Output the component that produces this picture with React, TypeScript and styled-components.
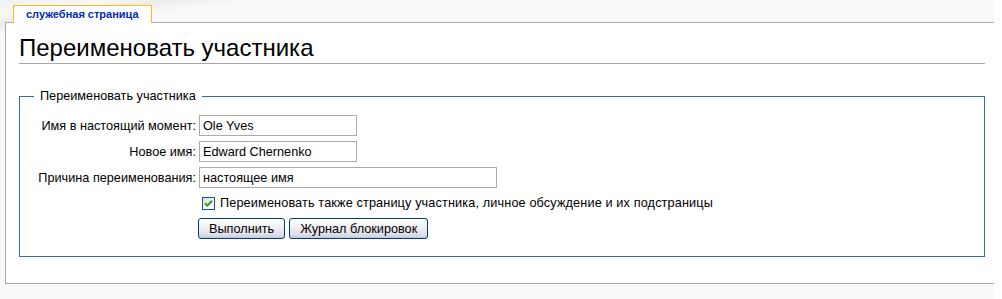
import * as React from "react";
import styled, { createGlobalStyle } from "styled-components";

const GlobalStyle = createGlobalStyle`
  html, body {
    margin: 0;
    padding: 0;
    background: #ffffff;
  }
  body {
    font-family: "Liberation Sans", Arial, sans-serif;
    font-size: 12.7px;
    color: #000;
  }
`;

const SPage = styled.div`
  width: 994px;
  min-height: 299px;
  padding-top: 5px;
  box-sizing: border-box;
  background:
    linear-gradient(172deg, #f1f1f1 0%, #f7f7f7 6%, #ececec 9%, #f9f9f9 14%) no-repeat,
    #f9f9f9;
  background-size: 100% 120px, auto;
`;

const STabs = styled.div`
  display: flex;
  padding-left: 13px;
  position: relative;
  z-index: 2;
  margin-bottom: -1px;
`;

const STab = styled.div`
  height: 18px;
  padding: 0 12px;
  box-sizing: border-box;
  border: 1px solid #fabd23;
  border-bottom: none;
  background: #fff;
  color: #002bb8;
  font-weight: bold;
  font-size: 11px;
  line-height: 17px;
`;

const SContent = styled.div`
  margin-left: 5px;
  border: 1px solid #aaa;
  border-right: none;
  background: #fff;
  padding: 0 9px 26px 13px;
`;

const SHeading = styled.h1`
  margin: 10px 0 0;
  padding-bottom: 1px;
  border-bottom: 1px solid #aaa;
  font-size: 24px;
  font-weight: normal;
  line-height: 29px;
`;

const SFieldset = styled.fieldset`
  margin: 25px 0 0;
  border: 1px solid #2f6fab;
  padding: 11px 0 17px 14px;
`;

const SLegend = styled.legend`
  padding: 0 6px;
  line-height: 15px;
`;

const SForm = styled.div`
  display: grid;
  grid-template-columns: 162px 1fr;
  column-gap: 3px;
  row-gap: 5px;
  align-items: center;
`;

const SLabel = styled.label`
  text-align: right;
  white-space: nowrap;
`;

const SInput = styled.input<{ $w: number }>`
  width: ${(p) => p.$w}px;
  height: 21px;
  box-sizing: border-box;
  border: 1px solid #a5acb2;
  padding: 0 3px;
  margin: 0;
  font-family: "Liberation Sans", Arial, sans-serif;
  font-size: 12.7px;
  color: #000;
  background: #fff;
  outline: none;
`;

const SCheckRow = styled.label`
  grid-column: 2;
  display: flex;
  align-items: center;
  height: 20px;
  gap: 5px;
  padding-left: 3px;
  letter-spacing: 0.13px;
`;

const SBox = styled.span`
  width: 13px;
  height: 13px;
  box-sizing: border-box;
  border: 1px solid #1c5180;
  background: linear-gradient(135deg, #dcdcd7 0%, #ffffff 80%);
  display: flex;
  align-items: center;
  justify-content: center;
`;

const SButtons = styled.div`
  grid-column: 2;
  display: flex;
  gap: 4px;
  margin-left: -1px;
`;

const SButton = styled.button`
  height: 21px;
  padding: 0 10px;
  border: 1px solid #003c74;
  border-radius: 3px;
  background: linear-gradient(180deg, #ffffff 0%, #f0f0f4 45%, #dcdbe8 85%, #c8c6dc 100%);
  font-family: "Liberation Sans", Arial, sans-serif;
  font-size: 12.7px;
  color: #000;
  cursor: pointer;
`;

const Check: React.FC = () => (
  <svg width="9" height="9" viewBox="0 0 9 9">
    <path d="M1 4.2 L3.4 6.6 L8 1.8" fill="none" stroke="#21a121" strokeWidth="2" />
  </svg>
);

export default function App() {
  return (
    <>
      <GlobalStyle />
      <SPage>
        <STabs>
          <STab>служебная страница</STab>
        </STabs>
        <SContent>
          <SHeading>Переименовать участника</SHeading>
          <SFieldset>
            <SLegend>Переименовать участника</SLegend>
            <SForm>
              <SLabel htmlFor="oldusername">Имя в настоящий момент:</SLabel>
              <div>
                <SInput id="oldusername" $w={158} defaultValue="Ole Yves" />
              </div>
              <SLabel htmlFor="newusername">Новое имя:</SLabel>
              <div>
                <SInput id="newusername" $w={158} defaultValue="Edward Chernenko" />
              </div>
              <SLabel htmlFor="reason">Причина переименования:</SLabel>
              <div>
                <SInput id="reason" $w={298} defaultValue="настоящее имя" />
              </div>
              <SCheckRow>
                <SBox>
                  <Check />
                </SBox>
                Переименовать также страницу участника, личное обсуждение и их подстраницы
              </SCheckRow>
              <SButtons>
                <SButton type="button">Выполнить</SButton>
                <SButton type="button">Журнал блокировок</SButton>
              </SButtons>
            </SForm>
          </SFieldset>
        </SContent>
      </SPage>
    </>
  );
}
